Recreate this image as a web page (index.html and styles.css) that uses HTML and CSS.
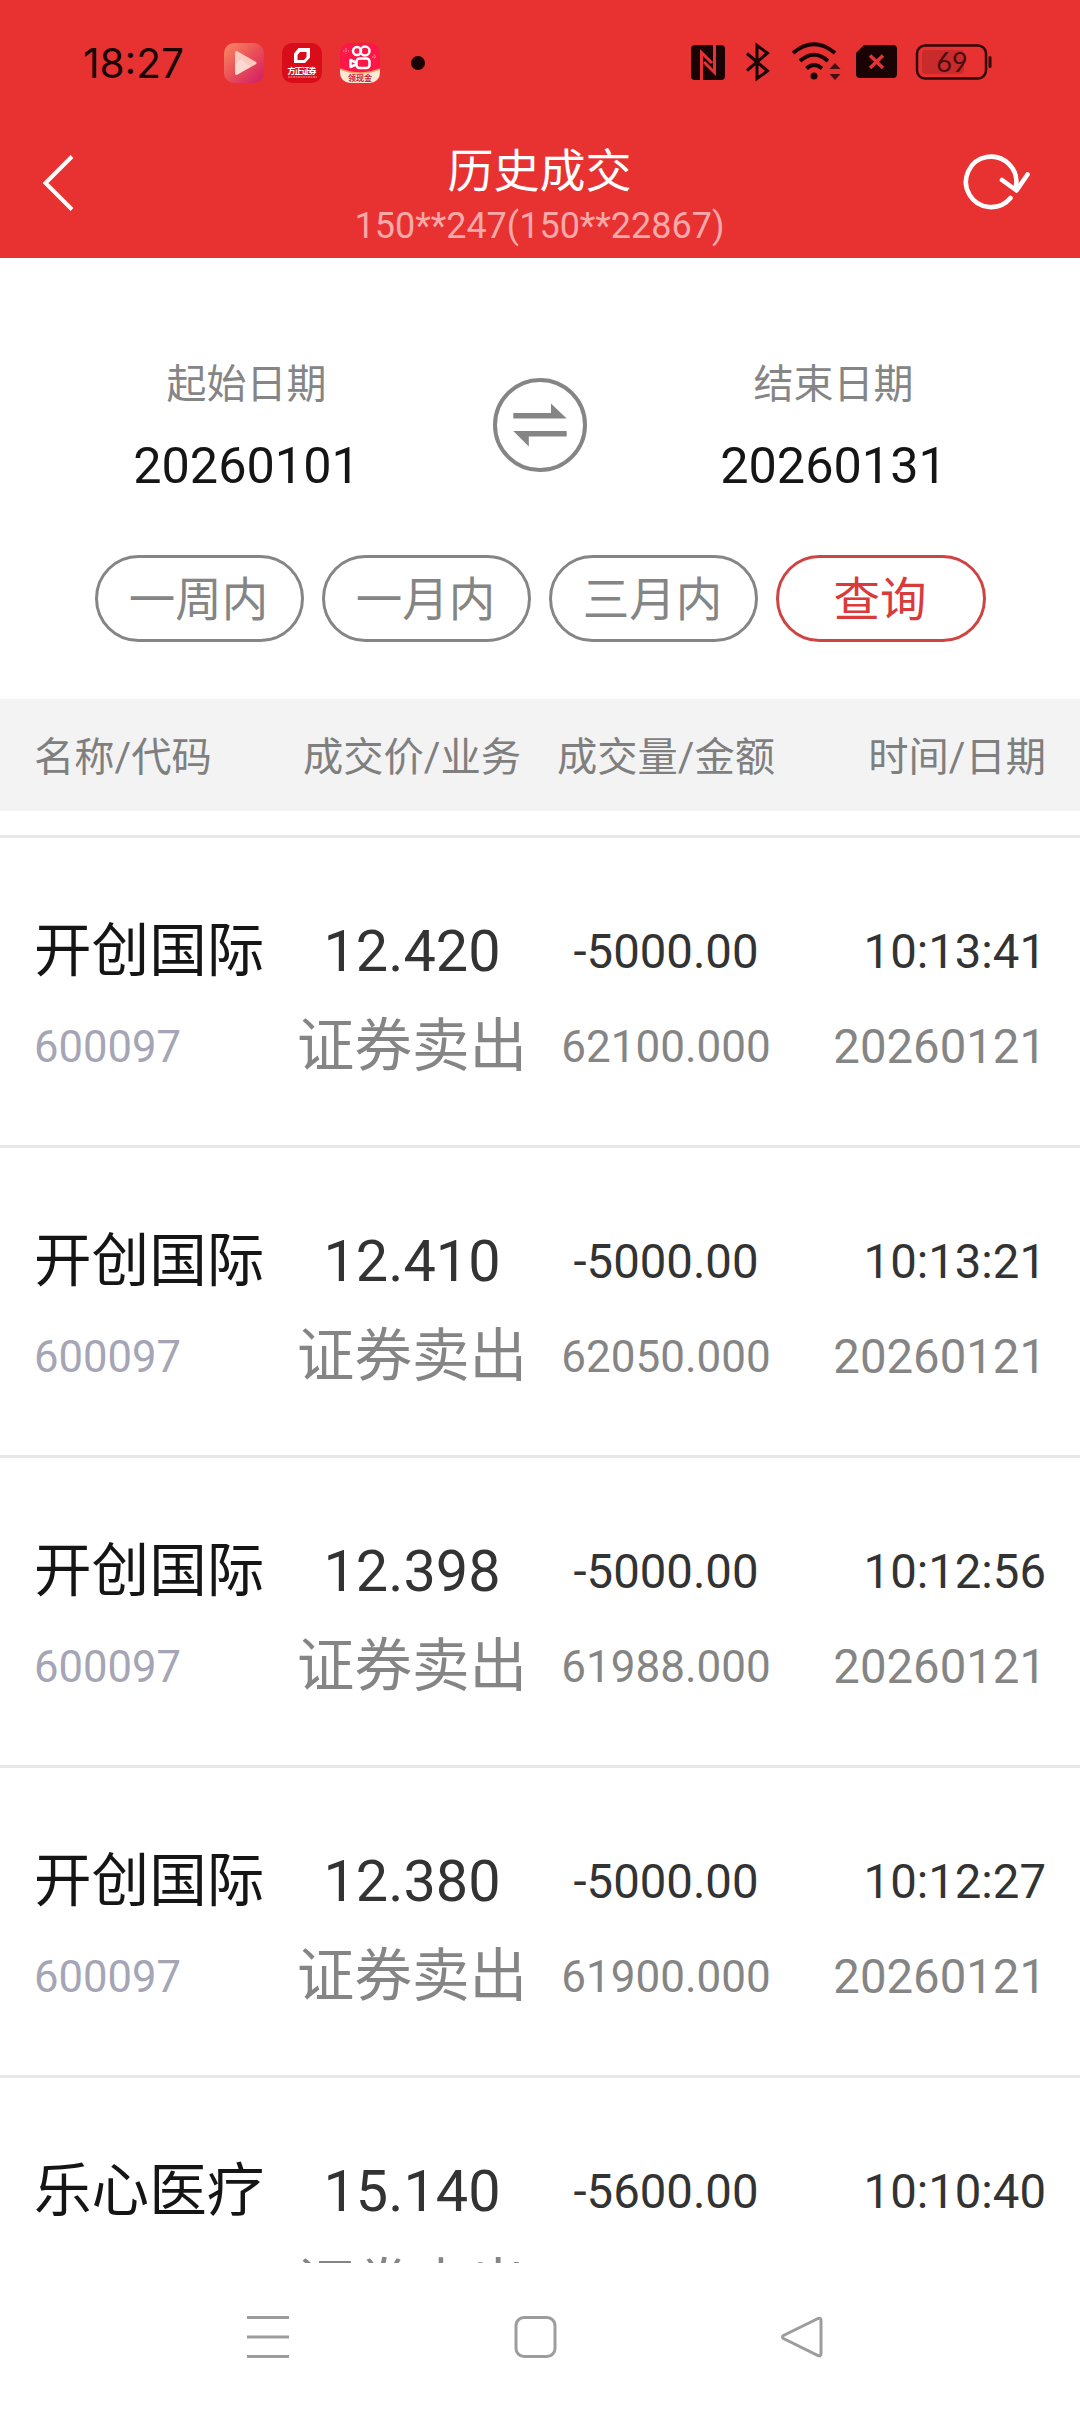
FILE: index.html
```html
<!DOCTYPE html>
<html lang="zh-CN">

<head>
    <meta charset="UTF-8">
    <meta name="viewport" content="width=device-width, initial-scale=1.0">
    <title>历史成交</title>
    <link rel="stylesheet" href="styles.css">
</head>

<body>
    <header class="top">
        <div class="status-bar">
            <span class="clock">18:27</span>
            <div class="apps">
                <svg class="app" viewBox="0 0 40 40">
                    <defs>
                        <linearGradient id="video" x1="0" y1="0" x2="1" y2="1">
                            <stop offset="0" stop-color="#f98a62" />
                            <stop offset="0.5" stop-color="#ea4f58" />
                            <stop offset="1" stop-color="#cf1c66" />
                        </linearGradient>
                    </defs>
                    <rect width="40" height="40" rx="10" fill="url(#video)" />
                    <path d="M12.500 9.500 31 20 12.500 30.500z" fill="#fbc9c0" stroke="#fbc9c0" stroke-width="3" stroke-linejoin="round" />
                    <path d="M11 22 17 16 26 24 12 32z" fill="#fff" opacity="0.3" />
                </svg>
                <svg class="app" viewBox="0 0 40 40">
                    <rect width="40" height="40" rx="10" fill="#d90d19" />
                    <path d="M16.500 5H28v9.500L23 20H12V10.500zM18 9l-2.500 3v5H22l2.500-3V9z" fill="#fff" fill-rule="evenodd" />
                    <text class="app-text" x="20" y="31" textLength="29" fill="#fff">方正证券</text>
                    <path d="M6 34h29" stroke="#f4a0a0" stroke-width="1" stroke-dasharray="2 .5" />
                </svg>
                <svg class="app" viewBox="0 0 40 40">
                    <defs>
                        <clipPath id="round"><rect width="40" height="40" rx="10" /></clipPath>
                    </defs>
                    <g clip-path="url(#round)">
                        <rect width="40" height="40" fill="#fb1748" />
                        <path d="M0 26Q20 34 40 26V40H0z" fill="#fde9d3" />
                        <path d="M0 26Q20 34 40 26" fill="none" stroke="#f9a25c" stroke-width="1.500" />
                        <g fill="none" stroke="#fff" stroke-width="2.500">
                            <circle cx="17" cy="8" r="4" />
                            <circle cx="25" cy="8" r="4.500" />
                            <rect x="16.500" y="15.500" width="13" height="9.500" rx="3" />
                            <path d="M16 19.500 10.500 17v7l5.500-2.500" stroke-linejoin="round" />
                        </g>
                        <path d="M3 8h6M6 5v6M32 14h5M34.500 11.500v5" stroke="#ff6f80" stroke-width="1.500" stroke-dasharray="1.500 1" />
                        <text class="app-text" x="20" y="38" textLength="24" fill="#c5203c">领现金</text>
                    </g>
                </svg>
                <i class="dot"></i>
            </div>
            <svg class="signals" viewBox="0 0 340 50">
                <g fill="#190304">
                    <rect x="21" y="5" width="34" height="35" rx="4" />
                    <circle cx="144" cy="36" r="3.500" />
                    <path d="M194 5h29a4 4 0 0 1 4 4v25a4 4 0 0 1-4 4h-33a4 4 0 0 1-4-4V13z" />
                </g>
                <g fill="none" stroke="#e83232" stroke-width="3">
                    <path d="M31.500 40V12.500L42 23" />
                    <path d="M44.500 5v27.500L34 22" />
                    <path d="M200 15.500 213 28M213 15.500 200 28" stroke-width="3.500" />
                </g>
                <g fill="none" stroke="#190304" stroke-width="3">
                    <path d="M77 13.500 97.500 31 87 38.500V5.500L97.500 13 77 30.500" />
                    <path d="M123 13Q144-4.500 165 13" stroke-width="4" />
                    <path d="M130 21Q144 8.500 158 21" stroke-width="4" />
                    <path d="M136.500 28.500Q144 21.500 152 28.500" stroke-width="4" />
                </g>
                <path d="M159.500 29 165 23l5.500 6zM159.500 34 165 40l5.500-6z" fill="#451012" />
                <rect x="252" y="10" width="42" height="24" rx="4" fill="#c92a2b" />
                <rect x="247" y="5.500" width="69" height="33" rx="8" fill="none" stroke="#310607" stroke-width="2.500" />
                <rect x="318.500" y="16" width="3" height="12" rx="1.500" fill="#310607" />
                <text class="battery-text" x="282" y="32">69</text>
            </svg>
        </div>
        <div class="nav-bar">
            <svg class="back" viewBox="0 0 34 60"><path d="M31 3.500 4.500 30 31 56.500" /></svg>
            <div class="titles">
                <h1>历史成交</h1>
                <p>150**247(150**22867)</p>
            </div>
            <svg class="refresh" viewBox="0 0 70 60">
                <path d="M48.500 45A25.200 25.200 0 1 1 54 33" />
                <path d="M40 27 54.500 37.500 65.500 21.500" />
            </svg>
        </div>
    </header>

    <section class="filter">
        <div class="dates">
            <div class="date">
                <span>起始日期</span>
                <b>20260101</b>
            </div>
            <svg class="swap" viewBox="0 0 94 94">
                <circle cx="47" cy="47" r="45" />
                <path d="M20.300 40.500v-5.500H58V25.500L73.700 40.500zM73.700 53v5.500H35.800V68.500L20.300 53z" />
            </svg>
            <div class="date">
                <span>结束日期</span>
                <b>20260131</b>
            </div>
        </div>
        <div class="ranges">
            <button>一周内</button>
            <button>一月内</button>
            <button>三月内</button>
            <button class="query">查询</button>
        </div>
    </section>

    <div class="table-head">
        <span class="col-name">名称/代码</span>
        <span class="col-price">成交价/业务</span>
        <span class="col-amount">成交量/金额</span>
        <span class="col-time">时间/日期</span>
    </div>

    <main class="list">
        <div class="row">
            <div class="col-name"><p class="name">开创国际</p><p class="code">600097</p></div>
            <div class="col-price"><p class="price">12.420</p><p class="type">证券卖出</p></div>
            <div class="col-amount"><p class="volume">-5000.00</p><p class="amount">62100.000</p></div>
            <div class="col-time"><p class="time">10:13:41</p><p class="day">20260121</p></div>
        </div>
        <div class="row">
            <div class="col-name"><p class="name">开创国际</p><p class="code">600097</p></div>
            <div class="col-price"><p class="price">12.410</p><p class="type">证券卖出</p></div>
            <div class="col-amount"><p class="volume">-5000.00</p><p class="amount">62050.000</p></div>
            <div class="col-time"><p class="time">10:13:21</p><p class="day">20260121</p></div>
        </div>
        <div class="row">
            <div class="col-name"><p class="name">开创国际</p><p class="code">600097</p></div>
            <div class="col-price"><p class="price">12.398</p><p class="type">证券卖出</p></div>
            <div class="col-amount"><p class="volume">-5000.00</p><p class="amount">61988.000</p></div>
            <div class="col-time"><p class="time">10:12:56</p><p class="day">20260121</p></div>
        </div>
        <div class="row">
            <div class="col-name"><p class="name">开创国际</p><p class="code">600097</p></div>
            <div class="col-price"><p class="price">12.380</p><p class="type">证券卖出</p></div>
            <div class="col-amount"><p class="volume">-5000.00</p><p class="amount">61900.000</p></div>
            <div class="col-time"><p class="time">10:12:27</p><p class="day">20260121</p></div>
        </div>
        <div class="row">
            <div class="col-name"><p class="name">乐心医疗</p></div>
            <div class="col-price"><p class="price">15.140</p><p class="type">证券卖出</p></div>
            <div class="col-amount"><p class="volume">-5600.00</p></div>
            <div class="col-time"><p class="time">10:10:40</p></div>
        </div>
    </main>

    <footer class="system-nav">
        <svg viewBox="0 0 46 46"><path d="M2 3.500h42M2 23h42M2 42.500h42" /></svg>
        <svg viewBox="0 0 46 46"><rect x="4" y="3.500" width="39" height="39" rx="8" /></svg>
        <svg viewBox="0 0 46 46"><path d="M39 4.500 4.500 21.500q-2 1.500 0 3L39 41.500q3 1 3-2v-33q0-3-3-2z" /></svg>
    </footer>
</body>

</html>
```

FILE: styles.css
```css
* {
    box-sizing: border-box;
}

body {
    display: flex;
    flex-direction: column;
    width: 1080px;
    height: 2412px;
    margin: 0;
    overflow: hidden;
    background: #fff;
    color: #333;
    font-family: Roboto, "Noto Sans CJK SC", sans-serif;
}

h1,
p {
    margin: 0;
    font-weight: 400;
}

.top {
    height: 258px;
    background: #e83232;
}

.status-bar {
    display: flex;
    align-items: center;
    height: 126px;
    padding-left: 83px;
}

.clock {
    width: 141px;
    color: #190304;
    font-family: Inter, sans-serif;
    font-size: 40.5px;
}

.apps {
    display: flex;
    align-items: center;
    gap: 18px;
    width: 446px;
}

.app {
    width: 40px;
    height: 40px;
}

.app-text {
    font-family: "Noto Sans CJK SC", sans-serif;
    font-size: 8px;
    font-weight: 700;
    text-anchor: middle;
}

.dot {
    width: 14px;
    height: 14px;
    margin-left: 13px;
    border-radius: 50%;
    background: #190304;
}

.signals {
    width: 340px;
    height: 50px;
    margin-top: 4px;
}

.battery-text {
    fill: #4a0d0e;
    font-family: Lato, sans-serif;
    font-size: 27px;
    text-anchor: middle;
}

.nav-bar {
    display: flex;
    justify-content: space-between;
    height: 132px;
    padding: 17px 48px 0 41px;
}

.back,
.refresh {
    fill: none;
    stroke: #fff;
    stroke-width: 4;
}

.back {
    width: 34px;
    height: 60px;
    margin-top: 10px;
    margin-right: 42px;
}

.refresh {
    width: 70px;
    height: 60px;
    margin-top: 10px;
    stroke-width: 4.6;
    stroke-linecap: round;
    stroke-linejoin: round;
}

.titles {
    color: #fff;
    text-align: center;
}

.titles h1 {
    font-size: 46px;
    line-height: 56px;
}

.titles p {
    color: #f7a9a9;
    font-size: 36px;
    line-height: 55px;
}

.filter {
    height: 441px;
    padding-top: 98px;
}

.dates {
    display: flex;
    height: 199px;
}

.date {
    flex: 1;
    text-align: center;
}

.date span,
.date b {
    display: block;
    font-weight: 400;
}

.date span {
    color: #858585;
    font-size: 40px;
    line-height: 58px;
}

.date b {
    padding-top: 23px;
    color: #151515;
    font-size: 50.4px;
    line-height: 58px;
}

.swap {
    width: 94px;
    height: 94px;
    margin-top: 22px;
    fill: #858585;
}

.swap circle {
    fill: none;
    stroke: #858585;
    stroke-width: 4;
}

.ranges {
    display: flex;
    gap: 18px;
    padding-left: 95px;
}

.ranges button {
    width: 209px;
    height: 87px;
    padding: 0 2px 7px 0;
    border: 3px solid #858585;
    border-radius: 44px;
    background: #fff;
    color: #858585;
    font-family: inherit;
    font-size: 46.5px;
}

.ranges .query {
    width: 210px;
    border-color: #cf4343;
    color: #d93a3a;
}

.table-head,
.row {
    display: grid;
    grid-template-columns: 252px 252px 256px 1fr;
    padding: 0 34px;
}

.table-head {
    align-items: center;
    height: 112px;
    padding-bottom: 3px;
    background: #f3f3f3;
    color: #7f7f7f;
    font-size: 40.3px;
    white-space: nowrap;
}

.col-price,
.col-amount {
    display: flex;
    flex-direction: column;
    align-items: center;
}

.col-time {
    text-align: right;
}

.list {
    height: 1452px;
    padding-top: 24px;
    overflow: hidden;
}

.row {
    height: 310px;
    padding-top: 66px;
    border-top: 3px solid #e8e8e8;
}

.row p {
    height: 95px;
    line-height: 95px;
    white-space: nowrap;
}

.row .volume,
.row .time,
.row .code,
.row .amount,
.row .day {
    line-height: 97px;
}

.name {
    color: #151515;
    font-size: 57.6px;
}

.code {
    color: #a5a5b5;
    font-size: 43.6px;
}

.price {
    font-size: 57.6px;
}

.type {
    color: #858585;
    font-size: 57.6px;
}

.volume,
.time,
.day {
    font-size: 47.3px;
}

.amount,
.day {
    color: #858585;
}

.amount {
    font-size: 44px;
}

.system-nav {
    display: flex;
    gap: 221px;
    height: 149px;
    padding: 51px 0 0 245px;
}

.system-nav svg {
    width: 46px;
    height: 46px;
    fill: none;
    stroke: #9d9d9d;
    stroke-width: 3;
}
```
